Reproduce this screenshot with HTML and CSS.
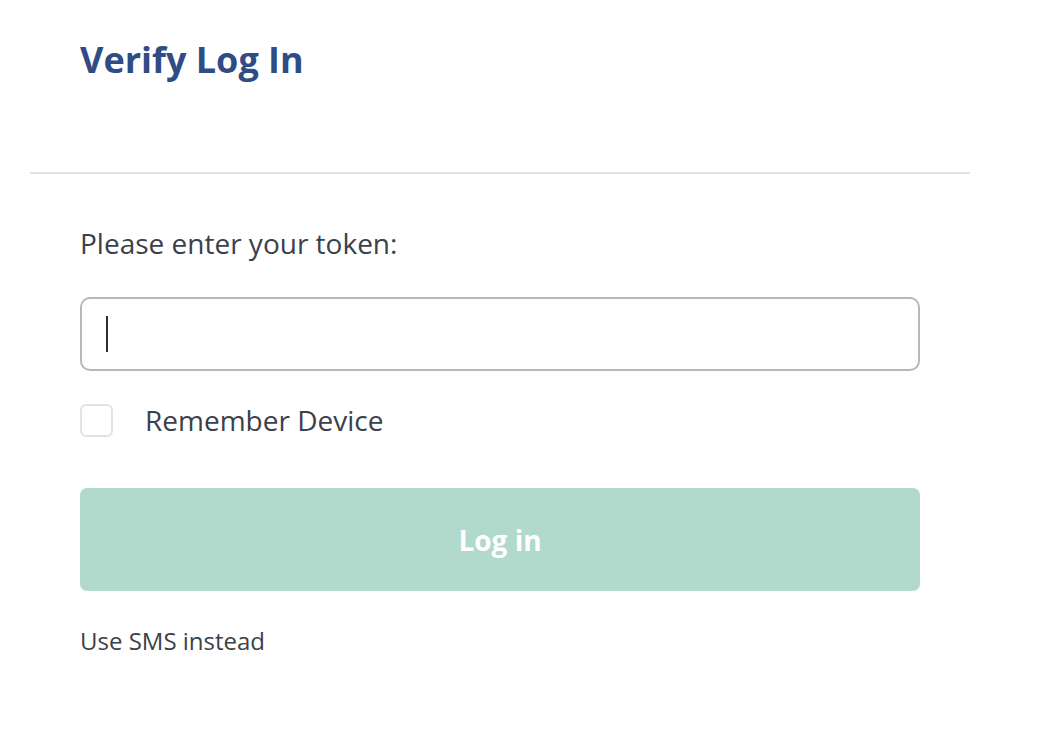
FILE: index.html
```html
<!DOCTYPE html>
<html lang="en">
<head>
<meta charset="utf-8">
<title>Verify Log In</title>
<link rel="stylesheet" href="styles.css">
</head>
<body>
<div class="page">
  <header class="header">
    <h1 class="title">Verify Log In</h1>
  </header>
  <hr class="divider">
  <form class="form">
    <label class="label" for="token">Please enter your token:</label>
    <div class="input"><span class="caret"></span></div>
    <div class="remember">
      <span class="checkbox"></span>
      <span class="remember-text">Remember Device</span>
    </div>
    <div class="button">Log in</div>
    <a class="sms">Use SMS instead</a>
  </form>
</div>
</body>
</html>
```

FILE: styles.css
```css
* { box-sizing: border-box; }
html, body { margin: 0; padding: 0; background: #ffffff; }
body {
  font-family: "Open Sans", "Liberation Sans", sans-serif;
  color: #3b414a;
  width: 1054px;
  height: 756px;
  overflow: hidden;
}
.page { padding-top: 35px; }
.header { padding-left: 80px; height: 137px; }
.title {
  margin: 0;
  font-size: 36px;
  line-height: 49px;
  font-weight: 700;
  color: #304c85;
}
.divider {
  margin: 0 0 0 30px;
  width: 940px;
  height: 2px;
  border: 0;
  background: #e1e4e7;
}
.form {
  padding: 0 0 0 80px;
  width: 920px;
  display: flex;
  flex-direction: column;
}
.label {
  margin-top: 50px;
  font-size: 28px;
  line-height: 38px;
}
.input {
  margin-top: 35px;
  height: 74px;
  border: 2px solid #b1b9c1;
  border-radius: 10px;
  display: flex;
  align-items: center;
  padding-left: 24px;
}
.caret {
  width: 2px;
  height: 36px;
  background: #2b2f36;
}
.remember {
  margin-top: 30px;
  height: 38px;
  display: flex;
  align-items: center;
  gap: 32px;
}
.checkbox {
  width: 33px;
  height: 33px;
  border: 2px solid #dfe4e8;
  border-radius: 6px;
}
.remember-text {
  font-size: 28px;
  line-height: 38px;
}
.button {
  margin-top: 49px;
  height: 103px;
  border-radius: 7px;
  background: #b1d9cc;
  color: #ffffff;
  font-weight: 700;
  font-size: 28px;
  display: flex;
  align-items: center;
  justify-content: center;
}
.sms {
  margin-top: 34px;
  font-size: 24px;
  line-height: 32px;
  color: #3b414a;
}
```
